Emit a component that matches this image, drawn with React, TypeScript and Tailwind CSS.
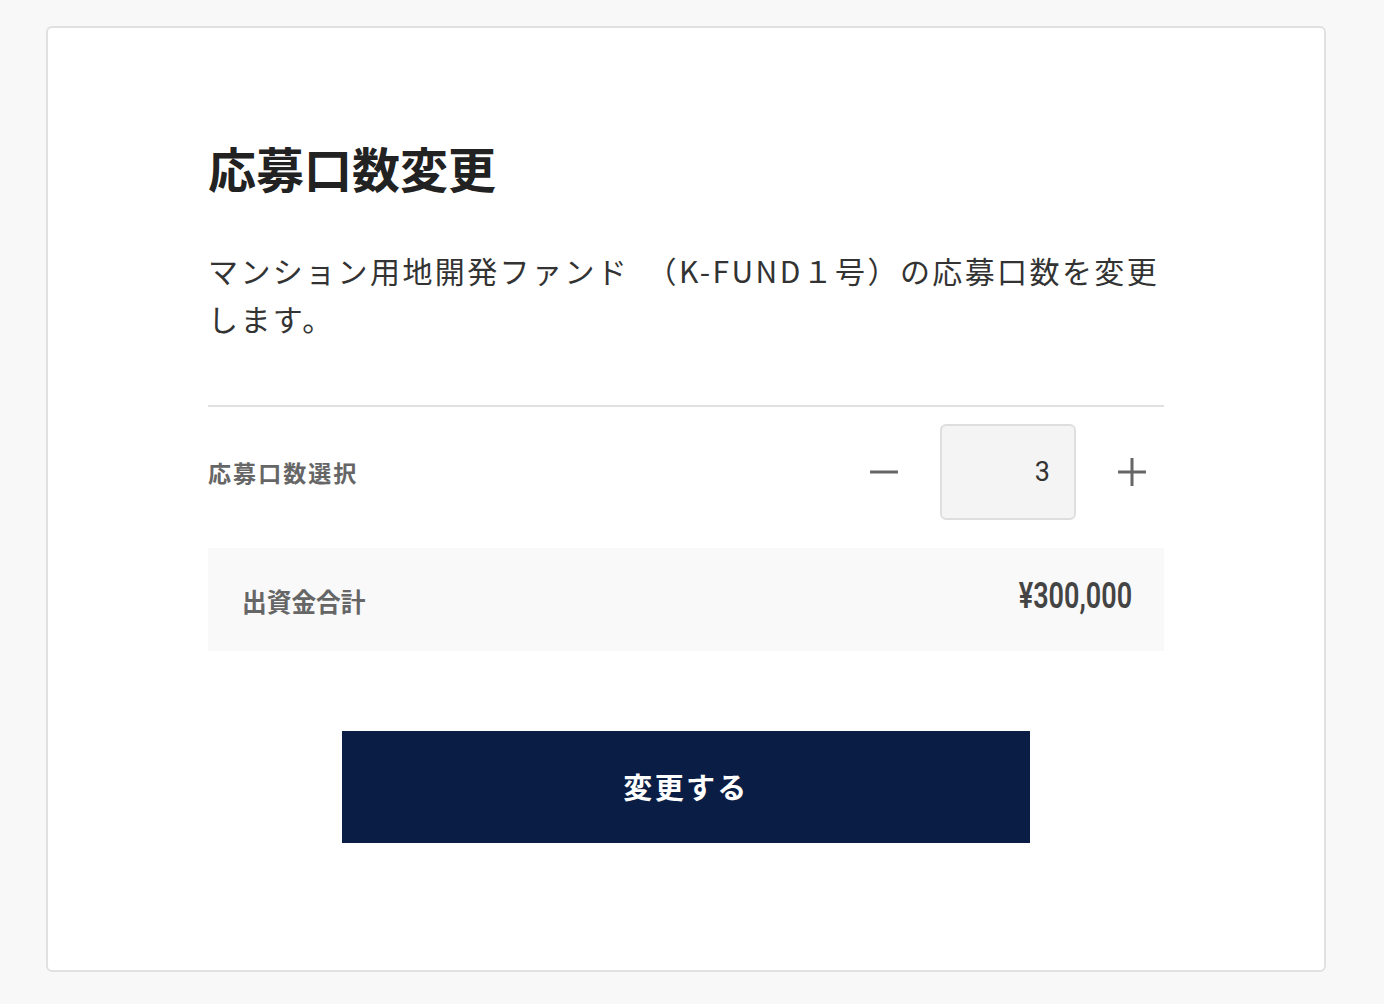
import React, { useState } from 'react';

const jp = '"Noto Sans CJK JP", "Noto Sans", sans-serif';

const UNIT_PRICE = 100000;

export default function App() {
  const [count, setCount] = useState(3);

  return (
    <div className="min-h-[1004px] w-[1384px] bg-[#f8f8f8] pt-[26px] pl-[46px]" style={{ fontFamily: jp }}>
      <div className="w-[1280px] h-[946px] rounded-[6px] border-2 border-[#e1e1e1] bg-white px-[160px] pt-[103px]">
        <h1 className="text-[48px] leading-[72px] font-bold text-[#222]">応募口数変更</h1>

        <p className="mt-[43px] text-[30px] leading-[48px] tracking-[0.08em] text-[#333]">
          マンション用地開発ファンド　（K-FUND１号）の応募口数を変更します。
        </p>

        <div className="mt-[63px] h-[2px] bg-[#e0e0e0]" />

        <div className="flex items-center justify-between pt-[17px] pb-[28px]">
          <span className="text-[23px] font-bold tracking-[0.09em] text-[#666]">応募口数選択</span>
          <div className="flex items-center gap-[42px] pr-[18px]">
            <button
              className="flex h-[28px] w-[28px] items-center justify-center"
              onClick={() => setCount((c) => Math.max(1, c - 1))}
            >
              <svg width="28" height="28" viewBox="0 0 28 28">
                <rect x="0" y="12.5" width="28" height="3" fill="#666" />
              </svg>
            </button>
            <div className="flex h-[96px] w-[136px] items-center justify-end rounded-[6px] border-2 border-[#dedede] bg-[#f4f4f4] pr-[24px]">
              <span className="text-[27px] text-[#333]" style={{ fontFamily: 'Roboto, sans-serif' }}>
                {count}
              </span>
            </div>
            <button
              className="flex h-[28px] w-[28px] items-center justify-center"
              onClick={() => setCount((c) => c + 1)}
            >
              <svg width="28" height="28" viewBox="0 0 28 28">
                <rect x="0" y="12.5" width="28" height="3" fill="#666" />
                <rect x="12.5" y="0" width="3" height="28" fill="#666" />
              </svg>
            </button>
          </div>
        </div>

        <div className="flex h-[103px] items-center justify-between bg-[#f9f9f9] pl-[34px] pr-[32px]">
          <span className="mt-[2px] origin-left scale-x-[0.95] text-[26px] font-bold text-[#666]">出資金合計</span>
          <span
            className="mb-[8px] origin-right scale-x-[0.75] text-[36px] leading-[40px] font-semibold text-[#444]"
            style={{ fontFamily: 'Roboto, sans-serif' }}
          >
            ¥{(count * UNIT_PRICE).toLocaleString('en-US')}
          </span>
        </div>

        <div className="mt-[80px] flex justify-center">
          <button className="flex h-[112px] w-[688px] items-center justify-center bg-[#0a1d44] text-[29px] font-bold tracking-[0.08em] text-white">
            変更する
          </button>
        </div>
      </div>
    </div>
  );
}
